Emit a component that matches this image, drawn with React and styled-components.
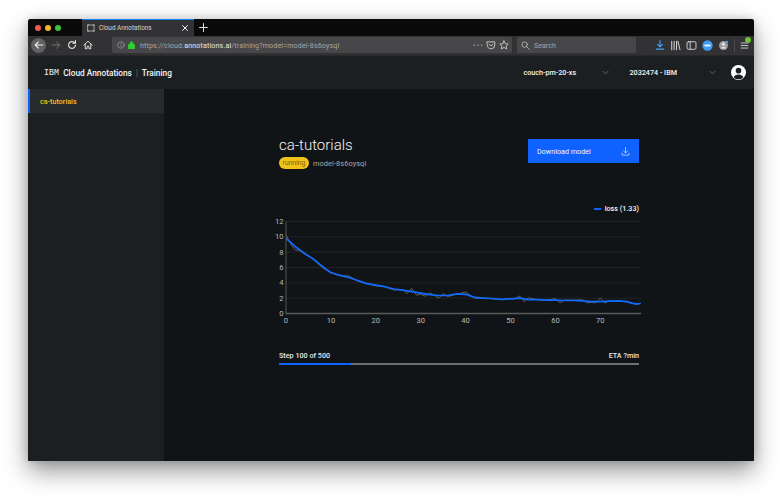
import React from "react";
import styled, { createGlobalStyle } from "styled-components";

const Global = createGlobalStyle`
  html, body { margin: 0; padding: 0; background: #fff; }
  body { width: 782px; height: 498px; overflow: hidden; font-family: "Roboto", "Liberation Sans", sans-serif; }
`;
const Page = styled.div`
  width: 782px; height: 498px; box-sizing: border-box; padding: 19px 28px 37px;
`;
const Win = styled.div`
  width: 726px; height: 442px; display: flex; flex-direction: column; overflow: hidden;
  border-radius: 3px 3px 1px 1px; background: #111417;
  box-shadow: 0 10px 24px rgba(0,0,0,.42), 0 0 10px rgba(0,0,0,.16);
`;
const TabBar = styled.div`
  height: 17px; flex: none; background: #0a0a0b; display: flex; align-items: stretch;
`;
const Lights = styled.div`
  width: 54px; display: flex; align-items: center; gap: 4px; padding-left: 7px; box-sizing: border-box; padding-top: 1px;
`;
const Light = styled.span`
  width: 6px; height: 6px; border-radius: 50%; background: ${p => p.$c};
`;
const Tab = styled.div`
  width: 112px; background: #323234; border-top: 1px solid #0a84ff; box-sizing: border-box;
  display: flex; align-items: center; padding: 0 5px; color: #d5d5d6; font-size: 6.4px; gap: 4px; white-space: nowrap;
`;
const TabLabel = styled.span` flex: 1; `;
const NewTab = styled.div`
  width: 16px; display: flex; align-items: center; justify-content: center; color: #dedede; margin-left: 1px;
`;
const Toolbar = styled.div`
  height: 20px; flex: none; background: #323234; display: flex; align-items: center; padding: 0 5px 1px 3px; box-sizing: border-box;
  border-bottom: 1px solid #27282a;
`;
const NavGroup = styled.div`
  width: 81px; flex: none; display: flex; align-items: center;
`;
const BackBtn = styled.div`
  width: 15px; height: 15px; border-radius: 50%; background: #616163; display: flex; align-items: center; justify-content: center; margin-right: 2px;
`;
const NavIcon = styled.div`
  width: 16px; height: 15px; display: flex; align-items: center; justify-content: center;
`;
const UrlBar = styled.div`
  width: 400px; height: 16px; flex: none; background: #474749; border-radius: 2px; display: flex; align-items: center; padding: 0 3px 0 5px; box-sizing: border-box;
  color: #a6a6a7; font-size: 7.1px; gap: 3px; white-space: nowrap;
`;
const UrlText = styled.span` flex: 1; margin-left: 2px; letter-spacing: .02em; `;
const Host = styled.span` color: #e6e6e6; `;
const SearchBar = styled.div`
  width: 119px; height: 16px; flex: none; margin-left: 5px; background: #474749; border-radius: 2px; display: flex; align-items: center; gap: 4px;
  padding-left: 4px; box-sizing: border-box; color: #a6a6a7; font-size: 7.1px;
`;
const ToolIcons = styled.div`
  flex: 1; display: flex; align-items: center; justify-content: flex-end; gap: 5px; position: relative;
`;
const ToolSep = styled.span` width: 1px; height: 13px; background: #4d4d4f; `;
const Badge = styled.span`
  position: absolute; right: -2px; top: -2px; width: 6px; height: 6px; border-radius: 50%; background: #6dc23a;
`;
const AppHeader = styled.div`
  height: 33px; flex: none; background: #1c1f22; display: flex; align-items: center; padding: 0 8px 0 16px; color: #f4f4f4; font-size: 8.3px; font-weight: 500; white-space: nowrap;
`;
const Brand = styled.span` font-weight: 400; letter-spacing: .01em; margin-right: 4px; font-family: "Liberation Mono", monospace; font-size: 8.3px; `;
const Divider = styled.span` font-weight: 300; color: #8d8d8d; margin: 0 4px; `;
const Spacer = styled.div` flex: 1; `;
const Select = styled.div`
  display: flex; align-items: center; justify-content: space-between; font-size: 7.2px; font-weight: 500; color: #f4f4f4; width: ${p => p.$w}px; margin-right: ${p => p.$m}px;
`;
const Body = styled.div` flex: 1; display: flex; min-height: 0; `;
const Sidebar = styled.div` width: 136px; flex: none; background: #1c1f22; `;
const SideItem = styled.div`
  height: 24px; background: #272b2e; border-left: 2px solid #0f62fe; box-sizing: border-box; display: flex; align-items: center; padding-left: 10px;
  color: #f1c21b; font-size: 7.2px; font-weight: 500;
`;
const Main = styled.div` flex: 1; min-width: 0; background: #111417; padding: 50px 115px 0 115px; box-sizing: border-box; `;
const Top = styled.div` display: flex; justify-content: space-between; align-items: flex-start; `;
const Title = styled.div` color: #f4f4f4; font-size: 15px; font-weight: 300; line-height: 14px; margin-top: -1px; `;
const Meta = styled.div` display: flex; align-items: center; gap: 4px; margin-top: 5px; `;
const Pill = styled.span`
  background: #f1c21b; color: #7d630a; font-size: 6.8px; border-radius: 6px; height: 12px; width: 30px; justify-content: center; display: flex; align-items: center;
`;
const Model = styled.span` color: #a8a8a8; font-size: 7.4px; letter-spacing: .01em; `;
const DownloadBtn = styled.div`
  width: 111px; height: 24px; background: #0f62fe; box-sizing: border-box; color: #f4f4f4; font-size: 7.2px; display: flex; align-items: center; justify-content: space-between; padding: 0 9px;
`;
const Legend = styled.div`
  display: flex; justify-content: flex-end; align-items: center; gap: 4px; color: #f4f4f4; font-size: 7.2px; font-weight: 500; margin-top: 35px;
`;
const LegendMark = styled.span` width: 7px; height: 2px; background: #0f62fe; `;
const Chart = styled.svg` display: block; margin: -2px 0 0 -9px; overflow: visible; `;
const Progress = styled.div` margin-top: 26px; `;
const ProgressText = styled.div`
  display: flex; justify-content: space-between; color: #e8e8e8; font-size: 7.2px; font-weight: 500; line-height: 9px;
`;
const Track = styled.div` height: 1.5px; background: #6f6f6f; margin-top: 3px; `;
const Fill = styled.div` height: 100%; background: #0f62fe; `;

const Stroke = ({ s = 10, c = "#d8d8d8", w = 1.4, children }) => (
  <svg width={s} height={s} viewBox="0 0 16 16" fill="none" stroke={c} strokeWidth={w} strokeLinecap="round" strokeLinejoin="round">{children}</svg>
);

const blue = [[0,9.8],[1,9.3],[2,8.75],[3,8.3],[4,7.9],[5,7.5],[6,7.12],[7,6.68],[8,6.2],[9,5.75],[10,5.35],[11,5.15],[12,5],[13,4.85],[14,4.7],[16,4.3],[18,3.9],[20,3.7],[22,3.5],[24,3.2],[26,3.05],[28,2.85],[30,2.65],[32,2.45],[34,2.35],[36,2.35],[38,2.55],[40,2.5],[42,2.1],[44,2],[46,1.95],[48,1.85],[50,1.9],[52,2],[54,1.8],[56,1.8],[58,1.75],[60,1.75],[62,1.7],[64,1.7],[66,1.65],[68,1.55],[70,1.55],[72,1.6],[74,1.65],[76,1.55],[77,1.35],[78,1.25],[79,1.3]];
const gray = [[0,10.3],[1,9.1],[2,8.3],[3,8.2],[4,7.8],[6,7.2],[8,6],[10,5.3],[12,4.9],[14,4.9],[16,4.2],[18,3.9],[20,3.6],[22,3.5],[24,3.05],[26,3.1],[27,2.6],[28,3.3],[29,2.4],[30,2.5],[31,2.25],[32,2.7],[33,2.4],[34,2],[35,2.6],[36,2.2],[38,2.5],[40,2.8],[41,2.4],[42,2],[44,2.05],[46,1.9],[48,1.8],[50,1.95],[51,1.9],[52,2.3],[53,1.55],[54,2.05],[56,1.8],[58,1.75],[60,1.95],[61,1.4],[62,1.75],[64,1.75],[66,1.8],[67,1.4],[68,1.45],[69,1.4],[70,2.05],[71,1.35],[72,1.65],[74,1.65],[76,1.5],[78,1.2],[79,1.3]];
const X0 = 16, Y0 = 102.5, SX = 4.49, SY = 7.67;
const px = d => d.map(([x, y]) => `${(X0 + x * SX).toFixed(1)},${(Y0 - y * SY).toFixed(1)}`).join(" ");

function LossChart() {
  return (
    <Chart width="371" height="114" viewBox="0 0 371 114" fontFamily="Roboto, sans-serif" fontSize="7.6">
      {[2,4,6,8,10,12].map(v => <line key={v} x1={X0} x2="371" y1={Y0 - v * SY} y2={Y0 - v * SY} stroke="#1f2327" strokeWidth="1" />)}
      <polyline points={px(gray)} fill="none" stroke="#5c5c5c" strokeWidth="1" strokeLinejoin="round" />
      <polyline points={px(blue)} fill="none" stroke="#0f6bff" strokeWidth="1.7" strokeLinejoin="round" />
      <line x1={X0} x2={X0} y1={Y0 - 12 * SY} y2={Y0} stroke="#555" strokeWidth="1" />
      <line x1={X0 - .5} x2="371" y1={Y0} y2={Y0} stroke="#5a5a5a" strokeWidth="1.6" />
      {[0,2,4,6,8,10,12].map(v => <text key={v} x={X0 - 2.5} y={Y0 - v * SY + 2.5} fill="#b8b8b8" textAnchor="end">{v}</text>)}
      {[0,10,20,30,40,50,60,70].map(v => <text key={v} x={X0 + v * SX} y={Y0 + 9.5} fill="#b8b8b8" textAnchor="middle">{v}</text>)}
    </Chart>
  );
}

export default function App() {
  return (
    <Page>
      <Global />
      <Win>
        <TabBar>
          <Lights>
            <Light $c="#ee5b50" /><Light $c="#f5b62d" /><Light $c="#3cc441" />
          </Lights>
          <Tab>
            <Stroke s={8} w={1.3}><rect x="2" y="2" width="12" height="12" /><path d="M0 2h4M12 2h4M0 14h4M12 14h4" /></Stroke>
            <TabLabel>Cloud Annotations</TabLabel>
            <Stroke s={8} c="#eee" w={2}><path d="M3 3l10 10M13 3L3 13" /></Stroke>
          </Tab>
          <NewTab><Stroke s={9} c="#e2e2e2" w={1.8}><path d="M8 1v14M1 8h14" /></Stroke></NewTab>
        </TabBar>
        <Toolbar>
          <NavGroup>
            <BackBtn><Stroke s={10} c="#f0f0f0" w={1.7}><path d="M14 8H2M7 3L2 8l5 5" /></Stroke></BackBtn>
            <NavIcon><Stroke s={10} c="#7a7a7b" w={1.5}><path d="M2 8h12M9 3l5 5-5 5" /></Stroke></NavIcon>
            <NavIcon><Stroke s={10} c="#e6e6e6" w={1.8}><path d="M13.5 8A5.5 5.5 0 1 1 11.5 3.7M13.5 1v4h-4" /></Stroke></NavIcon>
            <NavIcon><Stroke s={10} c="#e6e6e6" w={1.5}><path d="M1.5 8L8 2l6.5 6M3.5 7v7h3v-4h3v4h3V7" /></Stroke></NavIcon>
          </NavGroup>
          <UrlBar>
            <Stroke s={8} c="#a6a6a7" w={1.2}><circle cx="8" cy="8" r="6.5" /><path d="M8 7.5V11.5M8 4.6v.2" /></Stroke>
            <svg width="7" height="8" viewBox="0 0 14 16"><path d="M1 7h12v9H1zM4 7V4.5a3 3 0 0 1 6 0V7" fill="#2fd12f" stroke="#2fd12f" strokeWidth="1.6" /></svg>
            <UrlText>https://cloud.<Host>annotations.ai</Host>/training?model=model-8s6oysql</UrlText>
            <Stroke s={10} c="#d0d0d0" w={2}><path d="M2 8h.1M8 8h.1M14 8h.1" /></Stroke>
            <Stroke s={10} c="#d0d0d0" w={1.4}><path d="M2 3h12v5a6 6 0 0 1-12 0zM5 7l3 2.5L11 7" /></Stroke>
            <Stroke s={10} c="#d0d0d0" w={1.4}><path d="M8 1.5l2 4.3 4.7.6-3.4 3.2.9 4.7L8 11.9l-4.2 2.4.9-4.7L1.3 6.4 6 5.8z" /></Stroke>
          </UrlBar>
          <SearchBar>
            <Stroke s={9} c="#b0b0b0" w={1.6}><circle cx="6.5" cy="6.5" r="4.8" /><path d="M10 10l5 5" /></Stroke>
            Search
          </SearchBar>
          <ToolIcons>
            <Stroke s={10} c="#45a1ff" w={1.8}><path d="M8 1v9M4 7l4 4 4-4M2 14.5h12" /></Stroke>
            <Stroke s={11} c="#d0d0d0" w={1.5}><path d="M2.5 2v12M6 2v12M9.5 2v12M11.5 2l3 12" /></Stroke>
            <Stroke s={11} c="#d0d0d0" w={1.4}><rect x="1.5" y="2.5" width="13" height="11" rx="2" /><path d="M6 2.5v11" /></Stroke>
            <svg width="11" height="11" viewBox="0 0 16 16"><circle cx="8" cy="8" r="7.5" fill="#3f9bf5" /><rect x="3.5" y="6.5" width="9" height="3" rx="1" fill="#e8f3ff" /></svg>
            <svg width="11" height="11" viewBox="0 0 16 16"><circle cx="8" cy="8" r="6.5" fill="#9c9c9d" /><circle cx="8" cy="6" r="2.5" fill="#e0e0e0" /><path d="M3.5 12.5a5 5 0 0 1 9 0" fill="#e0e0e0" /><circle cx="13" cy="3" r="2" fill="#3f9bf5" /></svg>
            <ToolSep />
            <Stroke s={9} c="#d8d8d8" w={1.6}><path d="M2 3.5h12M2 8h12M2 12.5h12" /></Stroke>
            <Badge />
          </ToolIcons>
        </Toolbar>
        <AppHeader>
          <Brand>IBM</Brand>Cloud Annotations<Divider>|</Divider>Training
          <Spacer />
          <Select $w={85.5} $m={20.5}>couch-pm-20-xs<Stroke s={7} c="#8d8d8d" w={1.4}><path d="M2 5l6 6 6-6" /></Stroke></Select>
          <Select $w={86.5} $m={15}>2032474 - IBM<Stroke s={7} c="#8d8d8d" w={1.4}><path d="M2 5l6 6 6-6" /></Stroke></Select>
          <svg width="15" height="15" viewBox="0 0 16 16"><circle cx="8" cy="8" r="8" fill="#fff" /><circle cx="8" cy="6" r="3" fill="#1c1f22" /><path d="M2.8 13a5.6 4.6 0 0 1 10.4 0 7 7 0 0 1-10.4 0z" fill="#1c1f22" /></svg>
        </AppHeader>
        <Body>
          <Sidebar><SideItem>ca-tutorials</SideItem></Sidebar>
          <Main>
            <Top>
              <div>
                <Title>ca-tutorials</Title>
                <Meta><Pill>running</Pill><Model>model-8s6oysql</Model></Meta>
              </div>
              <DownloadBtn>Download model<Stroke s={9} c="#f4f4f4" w={1.1}><path d="M8 1v9.5M4.5 7L8 10.5 11.5 7M2 11v3.5h12V11" /></Stroke></DownloadBtn>
            </Top>
            <Legend><LegendMark />loss (1.33)</Legend>
            <LossChart />
            <Progress>
              <ProgressText><span>Step 100 of 500</span><span>ETA ?min</span></ProgressText>
              <Track><Fill style={{ width: `${(100 / 500) * 100}%` }} /></Track>
            </Progress>
          </Main>
        </Body>
      </Win>
    </Page>
  );
}
